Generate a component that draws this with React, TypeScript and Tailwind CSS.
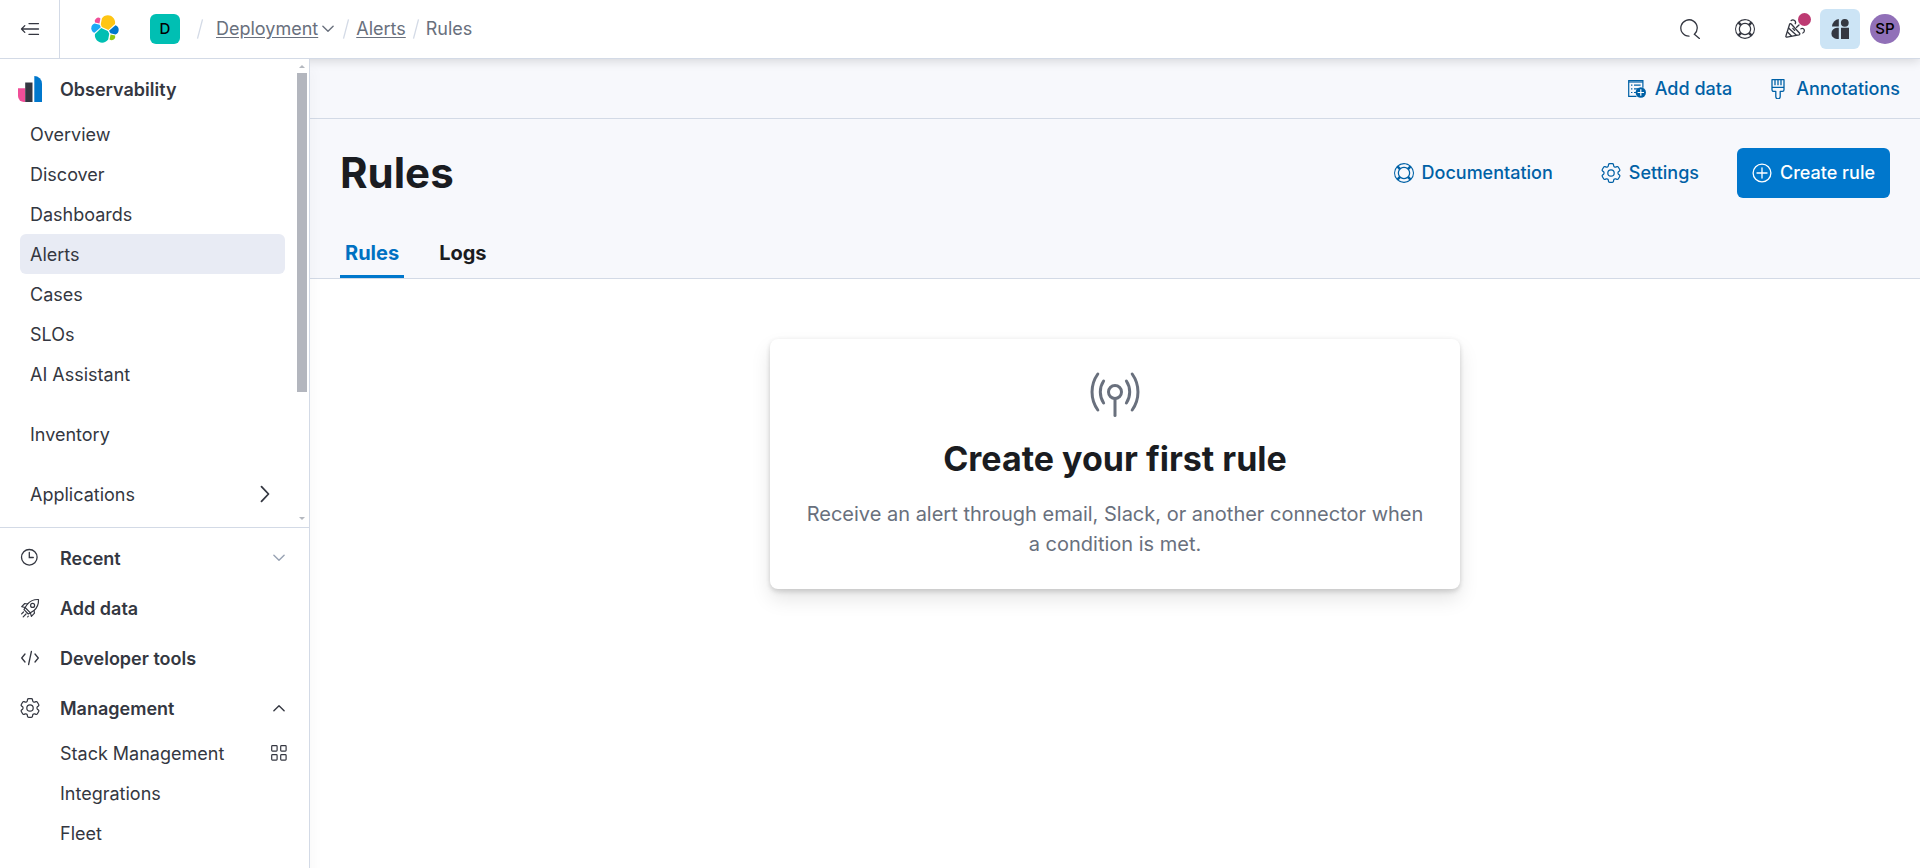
import React from "react";

type IconProps = { className?: string };

const HELP_PATH =
  "M13.6 12.186l-1.357-1.358c-.025-.025-.058-.034-.084-.056.53-.794.84-1.746.84-2.773a4.977 4.977 0 0 0-.84-2.772c.026-.02.059-.03.084-.056L13.6 3.813a6.96 6.96 0 0 1 0 8.373zM8 15a6.956 6.956 0 0 1-4.186-1.4l1.358-1.358c.025-.025.035-.057.055-.084A4.98 4.98 0 0 0 8 13a4.977 4.977 0 0 0 2.773-.84c.02.026.03.058.056.083l1.357 1.358A6.956 6.956 0 0 1 8 15zm-5.601-2.813a6.963 6.963 0 0 1 0-8.373l1.359 1.358c.024.025.057.035.084.055A4.97 4.97 0 0 0 3 8c0 1.027.31 1.98.842 2.773-.027.022-.06.031-.084.056l-1.36 1.358zm5.6-.187A4 4 0 1 1 8 4a4 4 0 0 1 0 8zM8 1c1.573 0 3.019.525 4.187 1.4l-1.357 1.358c-.025.025-.036.057-.056.084A4.977 4.977 0 0 0 8 3c-1.027 0-1.979.31-2.773.842-.02-.027-.03-.059-.055-.084L3.814 2.4A6.957 6.957 0 0 1 8 1zm0-1a8 8 0 1 0 .001 16.001A8 8 0 0 0 8 0z";

const GEAR_PATH =
  "M9.594 3.94c.09-.542.56-.94 1.11-.94h2.593c.55 0 1.02.398 1.11.94l.213 1.281c.063.374.313.686.645.87.074.04.147.083.22.127.325.196.72.257 1.075.124l1.217-.456a1.125 1.125 0 0 1 1.37.49l1.296 2.247a1.125 1.125 0 0 1-.26 1.431l-1.003.827c-.293.241-.438.613-.43.992a7.723 7.723 0 0 1 0 .255c-.008.378.137.75.43.991l1.004.827c.424.35.534.955.26 1.43l-1.298 2.247a1.125 1.125 0 0 1-1.369.491l-1.217-.456c-.355-.133-.75-.072-1.076.124a6.47 6.47 0 0 1-.22.128c-.331.183-.581.495-.644.869l-.213 1.281c-.09.543-.56.94-1.11.94h-2.594c-.55 0-1.019-.398-1.11-.94l-.213-1.281c-.062-.374-.312-.686-.644-.87a6.52 6.52 0 0 1-.22-.127c-.325-.196-.72-.257-1.076-.124l-1.217.456a1.125 1.125 0 0 1-1.369-.49l-1.297-2.247a1.125 1.125 0 0 1 .26-1.431l1.004-.827c.292-.24.437-.613.43-.991a6.932 6.932 0 0 1 0-.255c.007-.38-.138-.751-.43-.992l-1.004-.827a1.125 1.125 0 0 1-.26-1.43l1.297-2.247a1.125 1.125 0 0 1 1.37-.491l1.216.456c.356.133.751.072 1.076-.124.072-.044.146-.086.22-.128.332-.183.582-.495.644-.869l.214-1.28Z";

function HelpIcon({ className = "size-5" }: IconProps) {
  return (
    <svg viewBox="0 0 16 16" className={className} fill="currentColor" aria-hidden="true">
      <path fillRule="evenodd" d={HELP_PATH} />
    </svg>
  );
}

function GearIcon({ className = "size-5" }: IconProps) {
  return (
    <svg viewBox="2.3 2.3 19.4 19.4" className={className} fill="none" stroke="currentColor" strokeWidth="1.2" aria-hidden="true">
      <path d={GEAR_PATH} />
      <circle cx="12" cy="12" r="3.1" />
    </svg>
  );
}

function SearchIcon() {
  return (
    <svg viewBox="0 0 20 20" className="size-5" fill="none" stroke="currentColor" strokeWidth="1.3" strokeLinecap="round" aria-hidden="true">
      <path d="M9 17.2A8.2 8.2 0 1 1 14.4 15.2L19.4 19.4" />
    </svg>
  );
}

function CelebrateIcon() {
  return (
    <svg viewBox="0 0 20 20" className="size-5" fill="none" stroke="currentColor" strokeWidth="1.3" strokeLinecap="round" strokeLinejoin="round" aria-hidden="true">
      <path d="M6.2 5 14.6 14.2a1 1 0 0 1-.5 1.6L1.9 18.2a.9.9 0 0 1-1-1.2L4.6 5.3A.95.95 0 0 1 6.2 5Z" />
      <path d="M3.8 9.2 11.2 16M2.6 13 6.4 17M7.8 9.4 9.6 11.4" />
      <path d="M6.2 1.6a2.6 2.6 0 0 1 4 3.2M11.6 8.2 14 6M16 9.8c1.6-1 3.6.2 3.3 2.2-.1.9-.7 1.7-1.5 2" />
    </svg>
  );
}

function AssistantIcon() {
  return (
    <svg viewBox="0 0 20 22" className="h-[22px] w-5 text-[#343741]" fill="currentColor" aria-hidden="true">
      <path d="M8.8 1v7.4H2A8 8 0 0 1 8.8 1Z" />
      <circle cx="14.8" cy="4.8" r="3.9" />
      <path d="M8.8 9.8V21H7A5.6 5.6 0 0 1 7 9.8ZM11 9.8h8V21h-8Z" />
    </svg>
  );
}

function CollapseIcon() {
  return (
    <svg viewBox="0 0 20 20" className="size-5" fill="none" stroke="currentColor" strokeWidth="1.3" strokeLinecap="round" strokeLinejoin="round" aria-hidden="true">
      <path d="M9 4.6h9.5M2 10h16.5M9 15.4h9.5M4.8 6.6 1.5 10l3.3 3.4" />
    </svg>
  );
}

function ElasticLogo() {
  return (
    <svg viewBox="0 0 32 32" className="size-[30px]" aria-hidden="true">
      <path fill="#FEC514" d="m12.58 13.787 7.002 3.211 7.066-6.213a7.85 7.85 0 0 0 .152-1.557c0-4.287-3.464-7.763-7.736-7.763a7.72 7.72 0 0 0-6.386 3.397L11.5 11.01Z" />
      <path fill="#00BFB3" d="M5.333 21.215a7.96 7.96 0 0 0-.153 1.572c0 4.3 3.476 7.785 7.764 7.785 2.58 0 4.994-1.285 6.438-3.415l1.166-6.103-1.556-2.99-7.03-3.215Z" />
      <path fill="#F04E98" d="m5.288 9.067 4.8 1.137L11.14 4.73a3.785 3.785 0 0 0-5.852 4.337Z" />
      <path fill="#1BA9F5" d="M4.872 10.214a5.293 5.293 0 0 0-3.489 4.967 5.285 5.285 0 0 0 3.41 4.936l6.736-6.1-1.237-2.646Z" />
      <path fill="#93C90E" d="M20.873 27.177a3.768 3.768 0 0 0 2.285.782 3.783 3.783 0 0 0 3.567-5.036L21.93 21.8Z" />
      <path fill="#0077CC" d="m21.848 20.563 5.28 1.236a5.294 5.294 0 0 0 3.488-4.968 5.283 5.283 0 0 0-3.405-4.933l-6.906 6.057Z" />
    </svg>
  );
}

function ObservabilityLogo() {
  return (
    <svg viewBox="0 0 24 26" className="h-[26px] w-6" aria-hidden="true">
      <path fill="#F04E98" d="M0 12.3h7.2V26H6a6 6 0 0 1-6-6Z" />
      <path fill="#343741" d="M7.2 6.5h7.3V26H7.2Z" />
      <path fill="#0077CC" d="M16.3 0A7.7 7.7 0 0 1 24 7.7V26h-7.7Z" />
    </svg>
  );
}

function ClockIcon() {
  return (
    <svg viewBox="0 0 20 20" className="size-5" fill="none" stroke="currentColor" strokeWidth="1.3" strokeLinecap="round" aria-hidden="true">
      <circle cx="9.3" cy="9.3" r="7.8" />
      <path d="M9.3 4.5v5h4" />
    </svg>
  );
}

function RocketIcon() {
  return (
    <svg viewBox="0 0 20 20" className="size-5" fill="none" stroke="currentColor" strokeWidth="1.2" strokeLinecap="round" strokeLinejoin="round" aria-hidden="true">
      <path d="M18.5 1.5c.2 4.6-1 8-4.5 11l-3.6 2.3-5.3-5.3L7.5 6c3-3.5 6.4-4.7 11-4.5Z" />
      <circle cx="12.6" cy="7.4" r="2" />
      <path d="M7.5 6 4.8 5.5 1.7 8.6l3.4.9M14 12.5l.5 2.7-3.1 3.1-1-3.5M5.1 9.5l-1.1 2.2 4.3 4.3 2.1-1.2M3.5 14 1.6 15.9M6 16l-2.8 2.8M8.3 18.2l-.6.6" />
    </svg>
  );
}

function CodeIcon() {
  return (
    <svg viewBox="0 0 20 20" className="size-5" fill="none" stroke="currentColor" strokeWidth="1.3" strokeLinecap="round" strokeLinejoin="round" aria-hidden="true">
      <path d="m5 6-3.3 4L5 14M15 6l3.3 4-3.3 4M11.4 3.5 8.6 16.5" />
    </svg>
  );
}

function ChevronIcon({ className = "" }: IconProps) {
  return (
    <svg viewBox="0 0 12 8" className={`h-2 w-3 ${className}`} fill="none" stroke="currentColor" strokeWidth="1.4" strokeLinecap="round" strokeLinejoin="round" aria-hidden="true">
      <path d="m.9 1.2 5.1 5 5.1-5" />
    </svg>
  );
}

function GridIcon() {
  return (
    <svg viewBox="0 0 16 16" className="size-4" fill="none" stroke="currentColor" strokeWidth="1.2" aria-hidden="true">
      <rect x=".7" y=".7" width="5.4" height="5.4" rx=".8" />
      <rect x="9.7" y=".7" width="5.4" height="5.4" rx=".8" />
      <rect x=".7" y="9.7" width="5.4" height="5.4" rx=".8" />
      <rect x="9.7" y="9.7" width="5.4" height="5.4" rx=".8" />
    </svg>
  );
}

function AddDataIcon() {
  return (
    <svg viewBox="0 0 20 20" className="size-5" fill="none" stroke="currentColor" strokeWidth="1.2" aria-hidden="true">
      <path d="M9.5 17.4H1.7V1.7h14.2v7" />
      <path d="M1.7 3h14.2" />
      <path d="M4 6.2h1.4M7 6.2h6.6M4 9.8h1.4M7 9.8h4M4 13.5h1.4M7 13.5h2" />
      <circle cx="13.8" cy="13.5" r="5.2" fill="currentColor" stroke="none" />
      <path d="M13.8 10.3v6.4M10.6 13.5h6.4" stroke="#fff" />
    </svg>
  );
}

function BrushIcon() {
  return (
    <svg viewBox="0 0 20 20" className="size-5" fill="none" stroke="currentColor" strokeWidth="1.3" strokeLinejoin="round" aria-hidden="true">
      <path d="M4 .7h12v10.1a1.6 1.6 0 0 1-1.6 1.6h-2.2v5.2a2.2 2.2 0 0 1-4.4 0v-5.2H5.6a1.6 1.6 0 0 1-1.6-1.6Z" />
      <path d="M4 8.3h12M7 .7v5.5M10 .7v5.5M13 .7v5.5" />
    </svg>
  );
}

function PlusCircleIcon() {
  return (
    <svg viewBox="0 0 20 20" className="size-5" fill="none" stroke="currentColor" strokeWidth="1.3" strokeLinecap="round" aria-hidden="true">
      <circle cx="10" cy="10" r="8.9" />
      <path d="M10 5v10M5 10h10" />
    </svg>
  );
}

function BroadcastIcon() {
  return (
    <svg viewBox="0 0 50 50" className="size-[50px] text-[#69707D]" fill="none" stroke="currentColor" strokeWidth="3" strokeLinecap="round" aria-hidden="true">
      <circle cx="25" cy="23" r="6.5" />
      <path d="M25 30v16.5" />
      <path d="M13.6 12a20 20 0 0 0 0 22M36.4 12a20 20 0 0 1 0 22" />
      <path d="M7.8 5a31 31 0 0 0 0 36M42.2 5a31 31 0 0 1 0 36" />
    </svg>
  );
}

function Slash() {
  return (
    <svg viewBox="0 0 8 20" className="h-5 w-2" fill="none" stroke="#D3DAE6" strokeWidth="1.3" aria-hidden="true">
      <path d="M6.5.3 1.5 19.7" />
    </svg>
  );
}

const NAV_ITEMS = ["Overview", "Discover", "Dashboards", "Alerts", "Cases", "SLOs", "AI Assistant"];

function NavLink({ label, active = false }: { label: string; active?: boolean }) {
  return (
    <a
      href="#"
      aria-current={active ? "page" : undefined}
      className={`flex h-10 items-center rounded-md px-[10px] pt-[2px] ${active ? "bg-[#E8EBF4]" : ""}`}
    >
      {label}
    </a>
  );
}

function SectionButton({ icon, label, end }: { icon: React.ReactNode; label: string; end?: React.ReactNode }) {
  return (
    <button type="button" className="flex h-[50px] w-full items-center pr-6 pl-5 text-left font-semibold">
      {icon}
      <span className="ml-5 flex-1 pt-[2px]">{label}</span>
      {end}
    </button>
  );
}

function Header() {
  return (
    <header className="relative z-10 flex h-[59px] shrink-0 items-center border-b border-[#D3DAE6] bg-white pr-5 shadow-[0_2px_10px_rgba(0,0,0,0.14)]">
      <button type="button" aria-label="Collapse navigation" className="flex h-full w-[60px] items-center justify-center border-r border-[#D3DAE6]">
        <CollapseIcon />
      </button>
      <a href="#" aria-label="Home" className="ml-[30px]">
        <ElasticLogo />
      </a>
      <button type="button" className="ml-[30px] flex size-[30px] items-center justify-center rounded-md bg-[#00BFB3] text-[15px] font-medium text-black">
        D
      </button>
      <nav aria-label="Breadcrumbs" className="ml-4 flex items-center text-[#69707D]">
        <Slash />
        <a href="#" className="mr-1 ml-3 underline underline-offset-2">Deployment</a>
        <ChevronIcon className="mr-2" />
        <Slash />
        <a href="#" className="mx-[6px] underline underline-offset-2">Alerts</a>
        <Slash />
        <span className="ml-[6px]">Rules</span>
      </nav>
      <div className="ml-auto flex items-center">
        <button type="button" aria-label="Search" className="mr-[35px]"><SearchIcon /></button>
        <button type="button" aria-label="Help" className="mr-[30px]"><HelpIcon /></button>
        <button type="button" aria-label="What's new" className="relative mr-[15px]">
          <CelebrateIcon />
          <span className="absolute -top-[6px] -right-[6px] size-[13px] rounded-full bg-[#BD3A72]" />
        </button>
        <button type="button" aria-label="AI Assistant" className="mr-[10px] flex size-10 items-center justify-center rounded-md bg-[#CCE4F5]">
          <AssistantIcon />
        </button>
        <button type="button" className="flex size-[30px] items-center justify-center rounded-full bg-[#9170B8] text-[15px] font-medium text-black">
          SP
        </button>
      </div>
    </header>
  );
}

function Sidebar() {
  return (
    <aside className="relative z-20 flex w-[310px] shrink-0 flex-col border-r border-[#D3DAE6] bg-white shadow-[6px_10px_10px_rgba(0,0,0,0.02)]">
      <div className="flex min-h-0 flex-1 overflow-hidden">
        <nav aria-label="Observability" className="min-w-0 flex-1 pr-3">
          <a href="#" className="flex h-[55px] items-center pt-[5px] pl-[18px] font-semibold">
            <ObservabilityLogo />
            <span className="ml-[18px] pt-[2px]">Observability</span>
          </a>
          <div className="flex flex-col pl-5">
            {NAV_ITEMS.map((label) => (
              <NavLink key={label} label={label} active={label === "Alerts"} />
            ))}
            <div className="mt-5">
              <NavLink label="Inventory" />
            </div>
            <button type="button" className="mt-5 flex h-10 items-center justify-between pr-[13px] pl-[10px]">
              <span className="pt-[2px]">Applications</span>
              <svg viewBox="0 0 14 18" className="h-[18px] w-[14px]" fill="none" stroke="currentColor" strokeWidth="1.8" strokeLinecap="round" strokeLinejoin="round" aria-hidden="true">
                <path d="m3.5 1.7 7 7.3-7 7.3" />
              </svg>
            </button>
          </div>
        </nav>
        <div aria-hidden="true" className="mr-[2px] flex w-[10px] flex-col items-center justify-between pt-[6px] pb-[7px]">
          <div className="flex w-full flex-col items-center gap-[5px]">
            <svg viewBox="0 0 6 3" className="h-[3px] w-[6px]"><path d="M3 0 6 3H0Z" fill="#B4B8BF" /></svg>
            <div className="h-[319px] w-full bg-[#B3B6BE]" />
          </div>
          <svg viewBox="0 0 6 3" className="h-[3px] w-[6px]"><path d="M3 3 6 0H0Z" fill="#B4B8BF" /></svg>
        </div>
      </div>
      <div className="shrink-0 border-t border-[#D3DAE6] pt-[5px] pb-[15px]">
        <SectionButton icon={<ClockIcon />} label="Recent" end={<ChevronIcon className="text-[#98A2B3]" />} />
        <SectionButton icon={<RocketIcon />} label="Add data" />
        <SectionButton icon={<CodeIcon />} label="Developer tools" />
        <SectionButton icon={<GearIcon />} label="Management" end={<ChevronIcon className="rotate-180" />} />
        <div className="flex flex-col pr-[22px] pl-[60px]">
          <a href="#" className="flex h-10 items-center justify-between">
            <span className="pt-[2px]">Stack Management</span>
            <GridIcon />
          </a>
          <a href="#" className="flex h-10 items-center pt-[2px]">Integrations</a>
          <a href="#" className="flex h-10 items-center pt-[2px]">Fleet</a>
        </div>
      </div>
    </aside>
  );
}

export default function App() {
  return (
    <div className="flex h-screen flex-col bg-white font-['Inter',sans-serif] text-[18px] leading-6 text-[#343741]">
      <Header />
      <div className="flex min-h-0 flex-1">
        <Sidebar />
        <div className="flex min-w-0 flex-1 flex-col">
          <div className="flex h-[60px] shrink-0 items-center justify-end gap-9 border-b border-[#D3DAE6] bg-[#F7F8FC] pr-5 font-medium text-[#0061A6]">
            <a href="#" className="flex items-center gap-2"><AddDataIcon />Add data</a>
            <a href="#" className="flex items-center gap-2"><BrushIcon />Annotations</a>
          </div>
          <div className="flex h-40 shrink-0 flex-col justify-between border-b border-[#D3DAE6] bg-[#F7F8FC] px-[30px] pt-[29px]">
            <div className="flex h-[50px] items-center justify-between">
              <h1 className="text-[42px] leading-[50px] font-bold text-[#1A1C21]">Rules</h1>
              <div className="flex items-center font-medium text-[#0061A6]">
                <a href="#" className="mr-12 flex items-center gap-2"><HelpIcon />Documentation</a>
                <a href="#" className="mr-[38px] flex items-center gap-2"><GearIcon />Settings</a>
                <button type="button" className="flex h-[50px] items-center gap-2 rounded-md bg-[#0077CC] px-[15px] text-white">
                  <PlusCircleIcon />
                  Create rule
                </button>
              </div>
            </div>
            <div role="tablist" className="flex gap-[30px] text-[20px] leading-[30px] font-bold text-[#1A1C21]">
              <button type="button" role="tab" aria-selected="true" className="flex h-[50px] items-center border-b-3 border-[#0077CC] px-[5px] pt-[2px] text-[#0071C2]">Rules</button>
              <button type="button" role="tab" aria-selected="false" className="flex h-[50px] items-center border-b-3 border-transparent px-[5px] pt-[2px]">Logs</button>
            </div>
          </div>
          <main className="flex flex-1 flex-col items-center pt-[60px]">
            <section className="flex w-full max-w-[690px] flex-col items-center rounded-lg bg-white p-[30px] text-center shadow-[0_1px_5px_rgba(0,0,0,0.1),0_4px_5px_rgba(0,0,0,0.07),0_10px_20px_rgba(0,0,0,0.1)]">
              <BroadcastIcon />
              <h2 className="mt-5 text-[34px] leading-10 font-bold text-[#1A1C21]">Create your first rule</h2>
              <p className="mt-5 text-[20px] leading-[30px] text-[#69707D]">
                Receive an alert through email, Slack, or another connector when a condition is met.
              </p>
            </section>
          </main>
        </div>
      </div>
    </div>
  );
}
